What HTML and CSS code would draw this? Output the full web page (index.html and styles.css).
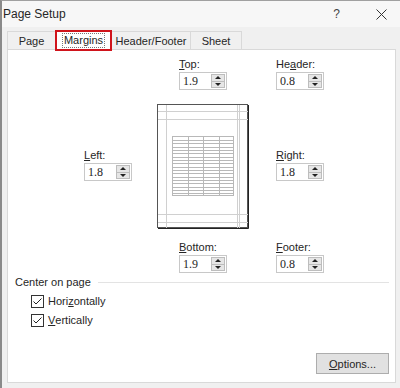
FILE: index.html
```html
<!DOCTYPE html>
<html lang="en">
<head>
  <meta charset="UTF-8" />
  <title>Page Setup</title>
  <link rel="stylesheet" href="styles.css">
</head>
<body>
  <div class="dialog">
    <div class="titlebar">
      <span class="title">Page Setup</span>
      <span class="help">?</span>
      <svg class="close" width="11" height="11" viewBox="0 0 11 11"><path d="M0.5 0.5 L10.5 10.5 M10.5 0.5 L0.5 10.5" stroke="#333" stroke-width="1" fill="none"/></svg>
    </div>

    <div class="tabs">
      <div class="tab tab-page">Page</div>
      <div class="tab active"><span class="focus">Margins</span></div>
      <div class="tab tab-hf">Header/Footer</div>
      <div class="tab tab-sheet">Sheet</div>
    </div>

    <div class="panel">
      <div class="margins">
        <div class="field f-top">
          <label><u>T</u>op:</label>
          <div class="spin"><span class="val">1.9</span><span class="btns"><i class="up"></i><i class="down"></i></span></div>
        </div>
        <div class="field f-header">
          <label>He<u>a</u>der:</label>
          <div class="spin"><span class="val">0.8</span><span class="btns"><i class="up"></i><i class="down"></i></span></div>
        </div>

        <div class="field f-left">
          <label><u>L</u>eft:</label>
          <div class="spin"><span class="val">1.8</span><span class="btns"><i class="up"></i><i class="down"></i></span></div>
        </div>
        <div class="preview">
          <svg width="92" height="125" viewBox="0 0 92 125">
            <rect x="0.5" y="0.5" width="90" height="123" fill="#fff" stroke="#555"/>
            <path d="M1 124.5 H91.5 V1" stroke="#222" fill="none"/>
            <g stroke="#d0d0d0" fill="none">
              <path d="M9.5 1 V124 M80.5 1 V124 M82.5 1 V124"/>
              <path d="M1 7.5 H91 M1 15.5 H91 M1 110.5 H91 M1 118.5 H91"/>
            </g>
            <g stroke="#b8b8b8" fill="none">
              <rect x="15.5" y="32.5" width="61" height="59"/>
              <path d="M31.5 32 V92 M46.5 32 V92 M62.5 32 V92"/>
              <path d="M15 36.5 H77 M15 39.5 H77 M15 43.5 H77 M15 46.5 H77 M15 49.5 H77 M15 53.5 H77 M15 56.5 H77 M15 59.5 H77 M15 63.5 H77 M15 66.5 H77 M15 69.5 H77 M15 73.5 H77 M15 76.5 H77 M15 79.5 H77 M15 83.5 H77 M15 86.5 H77 M15 89.5 H77"/>
            </g>
          </svg>
        </div>
        <div class="field f-right">
          <label><u>R</u>ight:</label>
          <div class="spin"><span class="val">1.8</span><span class="btns"><i class="up"></i><i class="down"></i></span></div>
        </div>

        <div class="field f-bottom">
          <label><u>B</u>ottom:</label>
          <div class="spin"><span class="val">1.9</span><span class="btns"><i class="up"></i><i class="down"></i></span></div>
        </div>
        <div class="field f-footer">
          <label><u>F</u>ooter:</label>
          <div class="spin"><span class="val">0.8</span><span class="btns"><i class="up"></i><i class="down"></i></span></div>
        </div>
      </div>

      <div class="center-group">
        <div class="group-title"><span>Center on page</span></div>
        <label class="check"><span class="box"><svg width="9" height="7" viewBox="0 0 9 7"><path d="M0.5 3.5 L3 6 L8.5 0.5" stroke="#222" fill="none"/></svg></span>Hori<u>z</u>ontally</label>
        <label class="check"><span class="box"><svg width="9" height="7" viewBox="0 0 9 7"><path d="M0.5 3.5 L3 6 L8.5 0.5" stroke="#222" fill="none"/></svg></span><u>V</u>ertically</label>
      </div>

      <div class="actions">
        <button class="btn"><u>O</u>ptions...</button>
      </div>
    </div>
  </div>
</body>
</html>
```

FILE: styles.css
```css
body {
  margin: 0;
  font-family: 'Liberation Sans', sans-serif;
  font-size: 11px;
  color: #262626;
}

.dialog {
  width: 400px;
  height: 388px;
  box-sizing: border-box;
  background-color: #f0f0f0;
  border-left: 2px solid #8a8a8a;
  border-top: 1px solid #a0a0a0;
  display: flex;
  flex-direction: column;
}

.titlebar {
  height: 26px;
  display: flex;
  align-items: center;
  background-color: #f7f7f7;
  padding: 0 13px 0 1px;
}

.title {
  font-size: 12px;
  flex: 1;
}

.help {
  font-size: 12px;
  color: #444;
  margin-right: 36px;
}

.tabs {
  display: flex;
  align-items: flex-end;
  height: 22px;
  padding-left: 6px;
}

.tab {
  height: 18px;
  box-sizing: border-box;
  border: 1px solid #d9d9d9;
  border-bottom: none;
  background-color: #f0f0f0;
  display: flex;
  align-items: center;
  justify-content: center;
  margin-left: -1px;
}

.tab-page { width: 49px; }
.tab-hf { width: 80px; }
.tab-sheet { width: 52px; }

.tab.active {
  width: 57px;
  height: 21px;
  background-color: #fff;
  border: 2px solid #d0141c;
  position: relative;
  z-index: 1;
  margin-bottom: -2px;
}

.focus {
  border: 1px dotted #777;
  padding: 0 1px;
  line-height: 13px;
}

.panel {
  flex: 1;
  margin: 0 4px 5px 5px;
  background-color: #fff;
  border: 1px solid #d9d9d9;
  display: flex;
  flex-direction: column;
}

.margins {
  display: grid;
  grid-template-columns: 73px 91px 28px auto;
  grid-template-rows: auto 124px auto;
  row-gap: 11px;
  padding: 6px 0 0 76px;
}

.f-top, .f-bottom { grid-column: 2; padding-left: 22px; }
.f-header, .f-footer, .f-right { grid-column: 4; }
.f-top, .f-header { margin-bottom: 3px; }
.f-left { grid-column: 1; }
.f-left, .f-right { align-self: center; margin-bottom: 4px; }
.preview { grid-column: 2; grid-row: 2; }

.field label {
  display: block;
  line-height: 16px;
}

.spin {
  width: 48px;
  height: 18px;
  box-sizing: border-box;
  border: 1px solid #c8c8c8;
  display: flex;
}

.val {
  flex: 1;
  font-family: 'Liberation Serif', serif;
  font-size: 12px;
  line-height: 16px;
  padding-left: 3px;
}

.btns {
  width: 14px;
  display: flex;
  flex-direction: column;
  margin: 1px 1px 1px 0;
}

.btns i {
  flex: 1;
  background-color: #e6e6e6;
  border: 1px solid #bdbdbd;
  display: flex;
  align-items: center;
  justify-content: center;
}

.btns i + i { border-top: none; }

.btns i::after {
  content: "";
  border-left: 3px solid transparent;
  border-right: 3px solid transparent;
}

.btns .up::after { border-bottom: 3px solid #222; }
.btns .down::after { border-top: 3px solid #222; }

.preview svg { display: block; }

.center-group {
  padding: 1px 0 0 7px;
}

.group-title {
  display: flex;
  align-items: center;
  line-height: 16px;
  margin-right: 6px;
}

.group-title::after {
  content: "";
  flex: 1;
  height: 1px;
  background-color: #e3e3e3;
  margin-left: 7px;
}

.check {
  display: flex;
  align-items: center;
  line-height: 16px;
  margin: 3px 0 0 16px;
}

.box {
  width: 11px;
  height: 11px;
  border: 1px solid #333;
  display: flex;
  align-items: center;
  justify-content: center;
  margin-right: 4px;
}

.actions {
  margin-top: auto;
  display: flex;
  justify-content: flex-end;
  padding: 0 6px 8px 0;
}

.btn {
  width: 73px;
  height: 21px;
  font-family: inherit;
  font-size: 11px;
  background-color: #e1e1e1;
  border: 1px solid #adadad;
  color: #262626;
}
```
